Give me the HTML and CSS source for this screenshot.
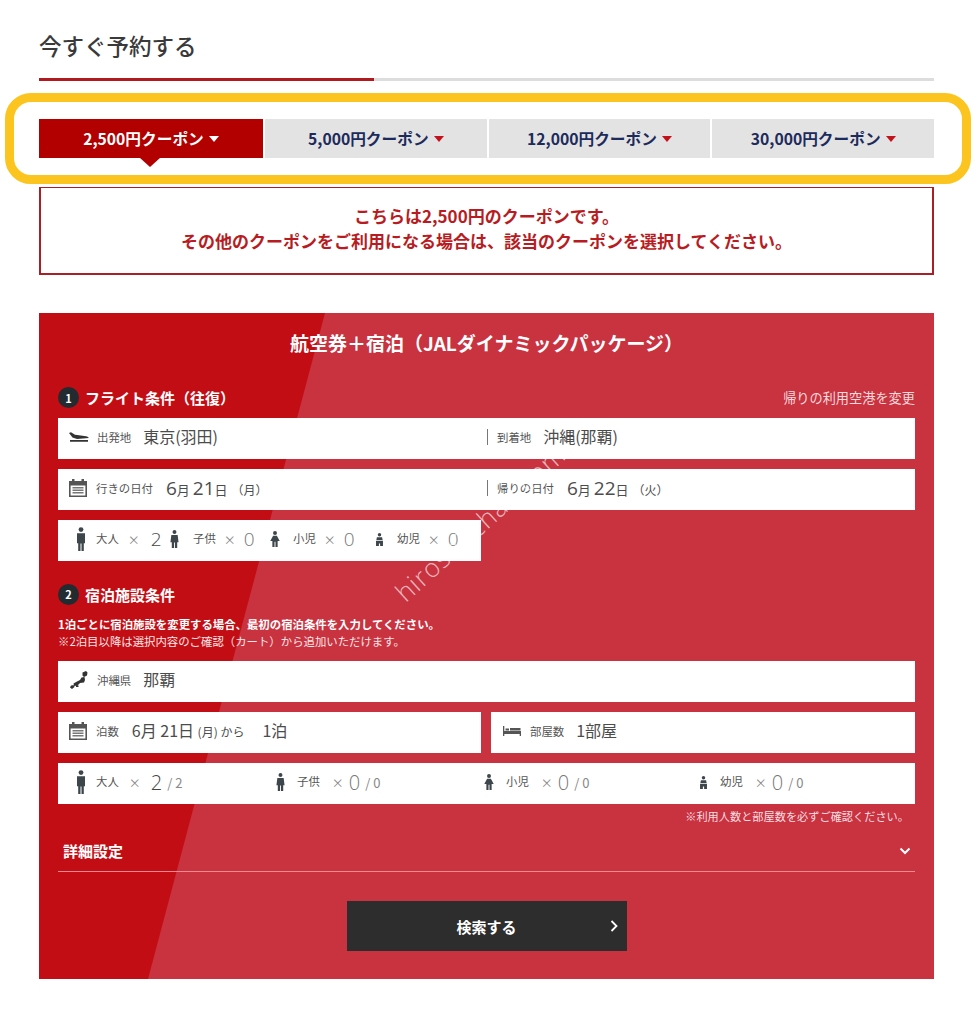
FILE: index.html
```html
<!DOCTYPE html>
<html lang="ja">
<head>
  <title>今すぐ予約する</title>
  <meta charset="utf-8">
  <meta name="viewport" content="width=device-width, initial-scale=1">
  <link rel="stylesheet" href="styles.css">
</head>
<body>
  <svg class="sprites" width="0" height="0">
    <symbol id="i-cal" viewBox="0 0 18 18"><path fill="#555" d="M0 2h3V0h2.500v2h7V0H15v2h3v16H0zM1.600 6.500V16.400h14.800V6.500z"/><path fill="#777" d="M3.500 8h11v1.500h-11zM3.500 10.500h11V12h-11zM3.500 13h11v1.500h-11z"/></symbol>
    <symbol id="i-plane" viewBox="0 0 20 10"><path fill="#333" d="M0 1l2-.8 4 2.500 2.200.2 8.800 1.300c1.500.3 2.600 1 2.800 1.900L8 7 3.500 5.500zM1 8h18v1.700H1z"/></symbol>
    <symbol id="i-adult" viewBox="0 0 10 24"><circle cx="5" cy="2.600" r="2.400" fill="#3d464b"/><path fill="#3d464b" d="M1 6.200h8v10H7.800V24H5.500v-7.500h-1V24H2.200v-7.800H1z"/></symbol>
    <symbol id="i-child" viewBox="0 0 10 20"><circle cx="5" cy="2.300" r="2.200" fill="#3d464b"/><path fill="#3d464b" d="M1.500 5.500h7l1 8H8V20H5.500v-6h-1v6H2v-6.500H.5z"/></symbol>
    <symbol id="i-kid" viewBox="0 0 10 17"><circle cx="5" cy="2.200" r="2.100" fill="#3d464b"/><path fill="#3d464b" d="M3 5h4l3 5.500H7.800V17H5.500v-5.500h-1V17H2.200v-6.500H0z"/></symbol>
    <symbol id="i-baby" viewBox="0 0 10 15"><circle cx="5" cy="2" r="2" fill="#3d464b"/><path fill="#3d464b" d="M2 4.800h6l.6 3.200H1.400zM1 9h8v6H5.700v-3h-1.400v3H1z"/></symbol>
    <symbol id="i-japan" viewBox="0 0 18 18"><path fill="#333" d="M12.500 1.500L16 0l1.500 1.500-.5 3-3 1.500-1.500-1.500zM11.500 6.500l3-.5.500 3-1 2.500-4 .5-2.500 2.500-3.500.5-.5-2.500 3.500-2 3-1.500zM1 14.500l3-.5.500 2L2 18l-2-1.500zM6 14.500h2.500V16H6z"/></symbol>
    <symbol id="i-bed" viewBox="0 0 18 10"><path fill="#555" d="M0 0h1.300v5H18v5h-1.300V8H1.300v2H0z"/><path fill="#555" d="M2.500 2.500h3.500v2H2.500zM7 2h10.500v2.500H7z"/></symbol>
  </svg>

  <div class="page">
    <h2 class="title">今すぐ予約する</h2>
    <div class="rule"><span class="rule-on"></span></div>

    <div class="highlight"></div>

    <ul class="tabs">
      <li class="tab tab-on">2,500円クーポン<i class="caret"></i></li>
      <li class="tab">5,000円クーポン<i class="caret"></i></li>
      <li class="tab">12,000円クーポン<i class="caret"></i></li>
      <li class="tab">30,000円クーポン<i class="caret"></i></li>
    </ul>

    <div class="notice">
      <p>こちらは2,500円のクーポンです。</p>
      <p>その他のクーポンをご利用になる場合は、該当のクーポンを選択してください。</p>
    </div>

    <section class="panel">
      <h3 class="panel-title">航空券＋宿泊（JALダイナミックパッケージ）</h3>

      <div class="step-head">
        <h4 class="step"><b class="badge">1</b>フライト条件（往復）</h4>
        <a class="change">帰りの利用空港を変更</a>
      </div>

      <div class="row split">
        <div class="cell">
          <svg class="ico-plane"><use href="#i-plane"/></svg>
          <span class="lbl">出発地</span><span class="val val-place">東京(羽田)</span>
        </div>
        <div class="cell cell-line">
          <span class="lbl">到着地</span><span class="val val-place">沖縄(那覇)</span>
        </div>
      </div>
      <div class="row split">
        <div class="cell">
          <svg class="ico-cal"><use href="#i-cal"/></svg>
          <span class="lbl">行きの日付</span><span class="val val-date"><em>6</em>月 <em>21</em>日<small>（月）</small></span>
        </div>
        <div class="cell cell-line">
          <span class="lbl">帰りの日付</span><span class="val val-date"><em>6</em>月 <em>22</em>日<small>（火）</small></span>
        </div>
      </div>
      <div class="row row-half people-short">
        <span class="who who-a"><svg class="ico-adult"><use href="#i-adult"/></svg><span class="lbl">大人</span><span class="times">×</span><em class="num">2</em></span>
        <span class="who who-b"><svg class="ico-child"><use href="#i-child"/></svg><span class="lbl">子供</span><span class="times">×</span><em class="num num-off">0</em></span>
        <span class="who who-c"><svg class="ico-kid"><use href="#i-kid"/></svg><span class="lbl">小児</span><span class="times">×</span><em class="num num-off">0</em></span>
        <span class="who who-d"><svg class="ico-baby"><use href="#i-baby"/></svg><span class="lbl">幼児</span><span class="times">×</span><em class="num num-off">0</em></span>
      </div>

      <h4 class="step step-two"><b class="badge">2</b>宿泊施設条件</h4>
      <p class="step-note"><b>1泊ごとに宿泊施設を変更する場合、最初の宿泊条件を入力してください。</b><br>※2泊目以降は選択内容のご確認（カート）から追加いただけます。</p>

      <div class="row">
        <div class="cell">
          <svg class="ico-japan"><use href="#i-japan"/></svg>
          <span class="lbl">沖縄県</span><span class="val val-place">那覇</span>
        </div>
      </div>
      <div class="row-pair">
        <div class="row cell">
          <svg class="ico-cal"><use href="#i-cal"/></svg>
          <span class="lbl lbl-nights">泊数</span><span class="val val-stay">6月 21日 <small>(月) から</small></span><span class="val val-one">1泊</span>
        </div>
        <div class="row cell">
          <svg class="ico-bed"><use href="#i-bed"/></svg>
          <span class="lbl">部屋数</span><span class="val val-place">1部屋</span>
        </div>
      </div>
      <div class="row people-long">
        <span class="who"><svg class="ico-adult"><use href="#i-adult"/></svg><span class="lbl">大人</span><span class="times">×</span><em class="num">2</em><span class="cap">/ 2</span></span>
        <span class="who"><svg class="ico-child"><use href="#i-child"/></svg><span class="lbl">子供</span><span class="times">×</span><em class="num num-off">0</em><span class="cap">/ 0</span></span>
        <span class="who"><svg class="ico-kid"><use href="#i-kid"/></svg><span class="lbl">小児</span><span class="times">×</span><em class="num num-off">0</em><span class="cap">/ 0</span></span>
        <span class="who"><svg class="ico-baby"><use href="#i-baby"/></svg><span class="lbl">幼児</span><span class="times">×</span><em class="num num-off">0</em><span class="cap">/ 0</span></span>
      </div>
      <p class="confirm">※利用人数と部屋数を必ずご確認ください。</p>

      <div class="detail">
        <span>詳細設定</span>
        <svg class="chev-down" viewBox="0 0 12 8"><path d="M1.500 1.500L6 6l4.500-4.500" fill="none" stroke="#fff" stroke-width="2"/></svg>
      </div>

      <button class="search">検索する
        <svg class="chev-right" viewBox="0 0 8 12"><path d="M1.500 1L6.500 6l-5 5" fill="none" stroke="#fff" stroke-width="1.800"/></svg>
      </button>

      <span class="watermark">hiroshi-chan.com</span>
    </section>
  </div>
</body>
</html>
```

FILE: styles.css
```css
*, *::before, *::after {
  margin: 0;
  padding: 0;
  box-sizing: border-box;
}

body {
  background-color: #FFFFFF;
  color: #444444;
  font-family: "Noto Sans CJK JP", "Noto Sans", sans-serif;
}

em, small {
  font-style: normal;
}

.sprites {
  position: absolute;
}

.page {
  position: relative;
  width: 895px;
  height: 1024px;
  margin-left: 39px;
  padding-top: 30px;
}

.title {
  height: 32px;
  font-size: 22.500px;
  font-weight: 500;
  line-height: 30px;
  color: #3a3a3a;
}

.rule {
  height: 3px;
  margin-top: 16px;
  background-color: #dddddd;
}

.rule-on {
  display: block;
  width: 335px;
  height: 3px;
  background-color: #b01a1f;
}

.highlight {
  position: absolute;
  top: 93px;
  left: -34px;
  width: 966px;
  height: 91px;
  border: 9px solid #fcc41e;
  border-radius: 26px;
}

.tabs {
  display: flex;
  gap: 2px;
  margin-top: 38px;
  list-style: none;
}

.tab {
  position: relative;
  display: flex;
  flex: 1;
  align-items: center;
  justify-content: center;
  height: 39px;
  padding-bottom: 1px;
  background-color: #e3e3e3;
  color: #1c2a5c;
  font-size: 15.700px;
  font-weight: 700;
}

.tab-on {
  flex: 0 0 224px;
  background-color: #b20000;
  color: #FFFFFF;
}

.tab-on::after {
  content: "";
  position: absolute;
  top: 100%;
  left: 50%;
  margin-left: -11px;
  border-top: 9px solid #b20000;
  border-right: 10px solid transparent;
  border-left: 10px solid transparent;
}

.caret {
  margin-left: 5px;
  margin-top: 2px;
  border-top: 6px solid #c4121a;
  border-right: 5px solid transparent;
  border-left: 5px solid transparent;
}

.tab-on .caret {
  border-top-color: #FFFFFF;
}

.notice {
  height: 88px;
  margin-top: 29px;
  padding-top: 15px;
  border: 2px solid #a81f28;
  border-top-width: 1px;
  color: #b81c22;
  font-size: 17px;
  font-weight: 700;
  line-height: 25px;
  text-align: center;
}

.panel {
  position: relative;
  height: 666px;
  margin-top: 38px;
  padding: 0 19px;
  overflow: hidden;
  background-color: #c9323f;
}

.panel::before {
  content: "";
  position: absolute;
  inset: 0;
  background-color: #c30d14;
  clip-path: polygon(0 0, 286px 0, 109px 100%, 0 100%);
}

.panel > * {
  position: relative;
}

.panel-title {
  padding-top: 16px;
  height: 62px;
  color: #FFFFFF;
  font-size: 19px;
  font-weight: 700;
  line-height: 28px;
  text-align: center;
}

.step-head {
  display: flex;
  align-items: center;
  justify-content: space-between;
  height: 43px;
  padding-top: 2px;
}

.step {
  display: flex;
  align-items: center;
  color: #FFFFFF;
  font-size: 15px;
  font-weight: 700;
}

.badge {
  display: inline-flex;
  align-items: center;
  justify-content: center;
  width: 21px;
  height: 21px;
  margin-right: 6px;
  border-radius: 50%;
  background-color: #222b30;
  font-size: 11px;
  font-weight: 700;
}

.change {
  color: #f6dadd;
  font-size: 13.200px;
}

.row {
  display: flex;
  align-items: center;
  height: 41px;
  padding-bottom: 3px;
  background-color: #FFFFFF;
}

.row + .row,
.row + .row-pair,
.row-pair + .row {
  margin-top: 10px;
}

.row-pair .row + .row {
  margin-top: 0;
}

.split .cell {
  flex: 1;
}

.split .cell + .cell {
  flex: 0 0 428px;
}

.cell {
  display: flex;
  align-items: center;
  padding-left: 12px;
}

.cell-line {
  position: relative;
  padding-left: 10px;
}

.cell-line::before {
  content: "";
  position: absolute;
  left: 0;
  top: 50%;
  width: 1px;
  height: 16px;
  margin-top: -8px;
  background-color: #777777;
}

.lbl {
  color: #555555;
  font-size: 11.400px;
  white-space: nowrap;
}

.val {
  color: #4c4c4c;
  font-size: 16px;
  white-space: nowrap;
}

.val-place {
  margin-left: 12px;
  padding-bottom: 3px;
}

.val-date {
  margin-left: 13px;
  padding-bottom: 1px;
  font-size: 13px;
}

.val-date em {
  font-family: "Open Sans", sans-serif;
  font-size: 19px;
}

.val-date small {
  margin-left: 4px;
  font-size: 12px;
}

.val-stay {
  margin-left: 13px;
  padding-bottom: 3px;
}

.val-stay small {
  font-size: 12px;
}

.val-one {
  margin-left: 18px;
  padding-bottom: 3px;
}

.ico-plane {
  width: 20px;
  height: 10px;
  margin: 0 8px 0 -1px;
}

.ico-cal {
  width: 18px;
  height: 18px;
  margin: 0 9px 0 -1px;
}

.ico-japan {
  width: 18px;
  height: 18px;
  margin-right: 9px;
}

.ico-bed {
  width: 18px;
  height: 10px;
  margin-right: 9px;
}

.row-half {
  width: 423px;
}

.row-pair {
  display: flex;
  gap: 10px;
}

.row-pair .row {
  flex: 1;
}

.row-pair .row:first-child {
  flex: 0 0 423px;
}

.who {
  display: flex;
  align-items: center;
}

.who .lbl {
  margin-top: -3px;
}

.ico-adult {
  width: 10px;
  height: 24px;
  margin-right: 10px;
}

.ico-child {
  width: 9px;
  height: 18px;
  margin-right: 14px;
}

.ico-kid {
  width: 10px;
  height: 16px;
  margin-right: 13px;
}

.ico-baby {
  width: 9px;
  height: 13px;
  margin-right: 13px;
}

.times {
  margin-left: 8px;
  color: #888888;
  font-size: 12px;
}

.num {
  margin-left: 8px;
  color: #444444;
  font-family: "Open Sans", sans-serif;
  font-size: 19px;
  font-weight: 300;
}

.num-off {
  color: #777777;
}

.cap {
  margin-left: 5px;
  color: #888888;
  font-size: 13px;
}

.people-short {
  padding-left: 18px;
}

.who-a {
  width: 94px;
}

.who-b {
  width: 100px;
}

.who-c {
  width: 105px;
}

.who-a .times {
  margin-left: 9px;
}

.who-a .num {
  margin-left: 11px;
}

.people-long {
  display: grid;
  grid-template-columns: 200px 208px 215px 1fr;
  padding-left: 18px;
}

.people-long .who + .who svg {
  margin-right: 12px;
}

.people-long .who + .who .times {
  margin-left: 12px;
}

.people-long .who + .who .num {
  margin-left: 5px;
  font-size: 20px;
}

.people-long .who:first-child .times {
  margin-left: 10px;
}

.people-long .who:first-child .num {
  margin-left: 10px;
  font-size: 20px;
}

.step-two {
  margin-top: 21px;
  height: 24px;
}

.step-note {
  margin-top: 10px;
  color: #f9e6e7;
  font-size: 11.400px;
  line-height: 17px;
}

.step-note b {
  color: #FFFFFF;
}

.step-note + .row {
  margin-top: 11px;
}

.confirm {
  height: 24px;
  padding-right: 6px;
  color: #f9dfe1;
  font-size: 11.200px;
  line-height: 24px;
  text-align: right;
}

.detail {
  display: flex;
  align-items: center;
  justify-content: space-between;
  height: 44px;
  padding: 2px 4px 0 5px;
  border-bottom: 1px solid #e88a92;
  color: #FFFFFF;
  font-size: 15px;
  font-weight: 700;
}

.chev-down {
  width: 12px;
  height: 8px;
}

.search {
  display: flex;
  align-items: center;
  justify-content: center;
  width: 280px;
  height: 50px;
  margin: 29px auto 0;
  border: none;
  background-color: #2d2d2d;
  color: #FFFFFF;
  font-family: inherit;
  font-size: 15px;
  font-weight: 700;
}

.chev-right {
  position: absolute;
  right: 9px;
  width: 8px;
  height: 12px;
}

.watermark {
  position: absolute !important;
  top: 192px;
  left: 332px;
  color: rgba(255, 255, 255, 0.65);
  font-family: "Open Sans", sans-serif;
  font-size: 26px;
  font-weight: 300;
  letter-spacing: 1px;
  white-space: nowrap;
  transform: rotate(-42deg);
}
```
